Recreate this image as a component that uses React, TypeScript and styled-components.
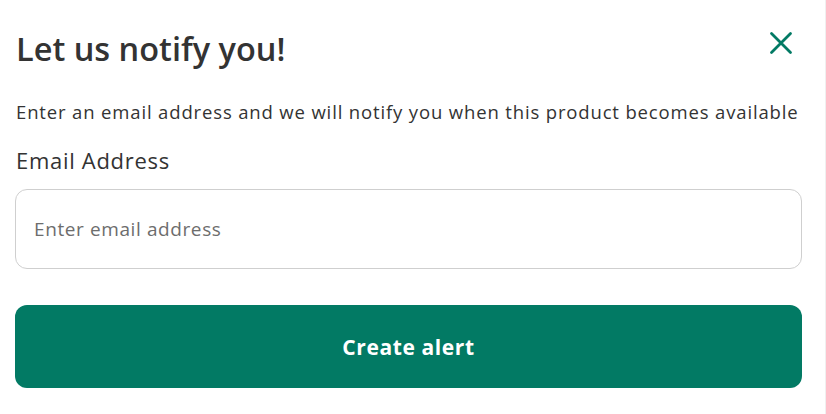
import React from "react";
import styled, { createGlobalStyle } from "styled-components";

const Global = createGlobalStyle`
  html, body { margin: 0; padding: 0; background: #fff; }
  body { font-family: "Open Sans", "Noto Sans", sans-serif; color: #333; }
`;

const Dialog = styled.div`
  box-sizing: border-box;
  width: 826px;
  height: 414px;
  padding: 26px 25px 0 15px;
  border-right: 1px solid #f0f0f0;
  display: flex;
  flex-direction: column;
`;

const Header = styled.div`
  display: flex;
  align-items: center;
  justify-content: space-between;
`;

const Title = styled.h2`
  margin: 0 0 0 1px;
  font-size: 32.5px;
  font-weight: 600;
  line-height: 46px;
  color: #333;
`;

const CloseButton = styled.button`
  border: 0;
  background: none;
  padding: 0;
  width: 30px;
  height: 30px;
  margin-right: 4px;
  margin-top: -12px;
  display: flex;
  align-items: center;
  justify-content: center;
  cursor: pointer;
`;

const Description = styled.p`
  margin: 28px 0 0 1px;
  font-size: 18.5px;
  letter-spacing: 0.85px;
  line-height: 24px;
  color: #333;
`;

const Label = styled.label`
  margin: 21px 0 0 1px;
  font-size: 22px;
  letter-spacing: 0.7px;
  font-weight: 500;
  line-height: 30px;
  color: #333;
`;

const Input = styled.input`
  box-sizing: border-box;
  margin-top: 14px;
  width: 787px;
  height: 80px;
  border: 1px solid #cfcfcf;
  border-radius: 12px;
  padding: 0 18px;
  font-family: inherit;
  font-size: 19px;
  letter-spacing: 0.6px;
  color: #333;
  outline: none;
  &::placeholder { color: #6d6d6d; }
`;

const Submit = styled.button`
  margin-top: 36px;
  width: 787px;
  height: 83px;
  border: 0;
  border-radius: 12px;
  background: #027a64;
  color: #fff;
  font-family: inherit;
  font-size: 21px;
  letter-spacing: 0.6px;
  font-weight: 700;
  cursor: pointer;
`;

export default function App() {
  return (
    <>
      <Global />
      <Dialog>
        <Header>
          <Title>Let us notify you!</Title>
          <CloseButton aria-label="Close">
            <svg width="24" height="24" viewBox="0 0 24 24" fill="none" stroke="#027a64" strokeWidth="2.8" strokeLinecap="round">
              <path d="M2.5 2.5 L21.5 21.5 M21.5 2.5 L2.5 21.5" />
            </svg>
          </CloseButton>
        </Header>
        <Description>Enter an email address and we will notify you when this product becomes available</Description>
        <Label htmlFor="email">Email Address</Label>
        <Input id="email" type="email" placeholder="Enter email address" />
        <Submit>Create alert</Submit>
      </Dialog>
    </>
  );
}
